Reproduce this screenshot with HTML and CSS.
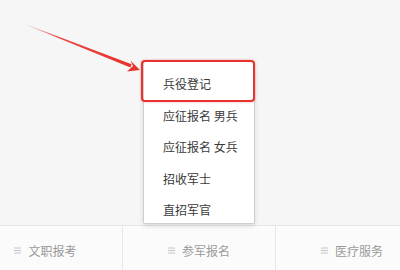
FILE: index.html
```html
<!DOCTYPE html>
<html lang="zh">
<head>
<meta charset="utf-8">
<link rel="stylesheet" href="styles.css">
</head>
<body>
<div class="page">
  <div class="stage">
    <div class="menu">
      <div class="item first">兵役登记<span class="mark"></span></div>
      <div class="item">应征报名 男兵</div>
      <div class="item">应征报名 女兵</div>
      <div class="item">招收军士</div>
      <div class="item">直招军官</div>
    </div>
  </div>
  <div class="tabbar">
    <div class="tab"><svg class="ico" width="7" height="7" viewBox="0 0 7 7"><path d="M0 1h7M0 3.5h7M0 6h7" stroke="#c4c4c4" stroke-width="1"/></svg><span>文职报考</span></div>
    <div class="tab"><svg class="ico" width="7" height="7" viewBox="0 0 7 7"><path d="M0 1h7M0 3.5h7M0 6h7" stroke="#c4c4c4" stroke-width="1"/></svg><span>参军报名</span></div>
    <div class="tab"><svg class="ico" width="7" height="7" viewBox="0 0 7 7"><path d="M0 1h7M0 3.5h7M0 6h7" stroke="#c4c4c4" stroke-width="1"/></svg><span>医疗服务</span></div>
  </div>
  <svg class="arrow" width="400" height="270" viewBox="0 0 400 270">
    <defs>
      <linearGradient id="g" x1="27" y1="25" x2="135" y2="68" gradientUnits="userSpaceOnUse">
        <stop offset="0" stop-color="#e8322d" stop-opacity="0.15"/>
        <stop offset="0.3" stop-color="#e8322d" stop-opacity="0.9"/>
        <stop offset="1" stop-color="#e8322d"/>
      </linearGradient>
    </defs>
    <polygon points="27,24.7 131.6,64.3 130.4,67.6 27,25.3" fill="url(#g)"/>
    <polygon points="140,70 130.5,60.5 133,66 127,71.5" fill="#e8322d"/>
  </svg>
</div>
</body>
</html>
```
FILE: styles.css
```css
html, body {
  margin: 0;
  padding: 0;
}
body {
  background: #f6f6f6;
  font-family: "Noto Sans CJK SC", "Noto Sans", sans-serif;
  width: 400px;
  height: 270px;
  overflow: hidden;
}
.page {
  position: relative;
  width: 400px;
  height: 270px;
  overflow: hidden;
}
.stage {
  height: 225px;
  padding-top: 61px;
  padding-left: 143px;
  box-sizing: border-box;
}
.menu {
  position: relative;
  width: 110px;
  height: 155px;
  background: #fff;
  border: 1px solid #cfcfcf;
  border-radius: 2px;
  box-shadow: 0 2px 5px rgba(0,0,0,0.12);
  padding-top: 6px;
  box-sizing: content-box;
}
.item {
  height: 31.5px;
  line-height: 31.5px;
  padding-left: 19px;
  font-size: 12px;
  color: #3a3a3a;
  white-space: nowrap;
}
.first {
  position: relative;
}
.mark {
  position: absolute;
  left: -3px;
  top: -8px;
  width: 110px;
  height: 38px;
  border: 2.5px solid #e8322d;
  border-radius: 4px;
  box-shadow: 0 0 2px rgba(232,50,45,0.5);
}
.tabbar {
  display: flex;
  margin-left: -31px;
  height: 48px;
  border-top: 1px solid #e6e6e6;
  background: #fbfbfb;
}
.tab {
  flex: 0 0 153px;
  display: flex;
  align-items: center;
  justify-content: center;
  gap: 7px;
  font-size: 12px;
  color: #9a9a9a;
  box-sizing: border-box;
}
.tab + .tab {
  border-left: 1px solid #e8e8e8;
}
.ico {
  display: block;
}
.arrow {
  position: absolute;
  left: 0;
  top: 0;
}
```
